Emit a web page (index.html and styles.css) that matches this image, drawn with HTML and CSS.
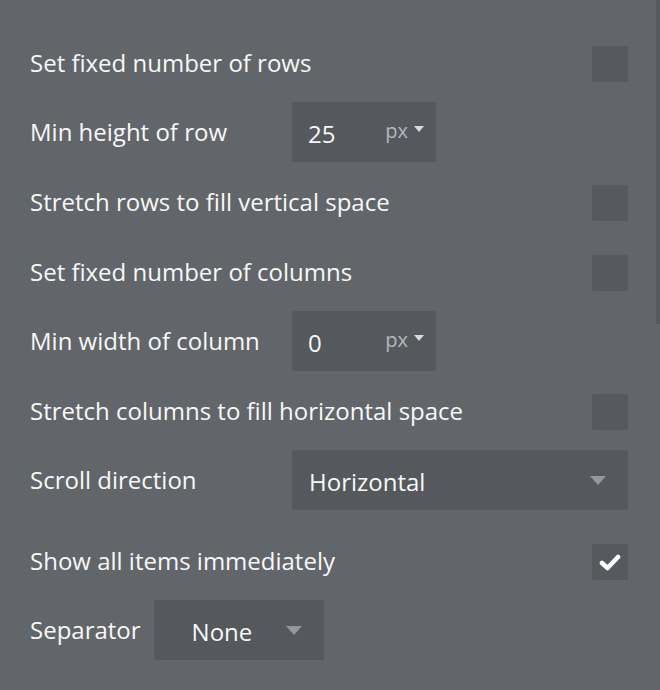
FILE: index.html
```html
<!DOCTYPE html>
<html>
<head>
<meta charset="utf-8">
<link rel="stylesheet" href="styles.css">
</head>
<body>
<div class="panel">
  <div class="row cb"><span class="label">Set fixed number of rows</span><span class="check"></span></div>
  <div class="row inp"><span class="label fixed">Min height of row</span>
    <div class="unit-input"><span class="val">25</span><span class="unit">px</span><span class="caret small"></span></div></div>
  <div class="row cb"><span class="label">Stretch rows to fill vertical space</span><span class="check"></span></div>
  <div class="row cb"><span class="label">Set fixed number of columns</span><span class="check"></span></div>
  <div class="row inp"><span class="label fixed">Min width of column</span>
    <div class="unit-input"><span class="val">0</span><span class="unit">px</span><span class="caret small"></span></div></div>
  <div class="row cb"><span class="label">Stretch columns to fill horizontal space</span><span class="check"></span></div>
  <div class="row inp extra"><span class="label fixed">Scroll direction</span>
    <div class="dropdown wide"><span class="val">Horizontal</span><span class="caret"></span></div></div>
  <div class="row cb"><span class="label">Show all items immediately</span><span class="check on"><svg width="22" height="17" viewBox="0 0 22 17"><polyline points="3,9 8.5,14 19,3" fill="none" stroke="#fff" stroke-width="4.6" stroke-linecap="round" stroke-linejoin="round"/></svg></span></div>
  <div class="row inp"><span class="label sep">Separator</span>
    <div class="dropdown narrow"><span class="val">None</span><span class="caret"></span></div></div>
</div>
<div class="scrollbar"></div>
</body>
</html>
```
FILE: styles.css
```css
html, body {
  margin: 0;
  padding: 0;
  background: #62666a;
  height: 100%;
  overflow: hidden;
}
body {
  font-family: "Open Sans", "Liberation Sans", sans-serif;
  font-size: 24px;
  color: #f7f7f7;
  position: relative;
}
.panel {
  display: flex;
  flex-direction: column;
  gap: 9px;
  padding: 32px 32px 0 30px;
}
.row {
  display: flex;
  align-items: center;
}
.row.cb {
  padding: 14px 0 11px;
  justify-content: space-between;
}
.row.inp {
  height: 60px;
}
.row.extra {
  margin-bottom: 11px;
}
.label {
  white-space: nowrap;
  line-height: 30px;
}
.row.cb .label {
  position: relative;
  top: -1px;
}
.label.fixed {
  width: 262px;
  flex: none;
}
.label.sep {
  margin-right: 13px;
}
.check {
  width: 36px;
  height: 36px;
  border-radius: 2px;
  background: #56595d;
  display: flex;
  align-items: center;
  justify-content: center;
}
.unit-input, .dropdown {
  height: 60px;
  background: #55595d;
  border-radius: 2px;
  display: flex;
  align-items: center;
  box-sizing: border-box;
}
.unit-input {
  width: 144px;
  padding: 0 12px 0 16px;
}
.val {
  position: relative;
  top: 1px;
}
.unit-input .val {
  flex: 1;
}
.unit {
  color: #b4b7ba;
  font-size: 20px;
  margin-right: 6px;
  position: relative;
  top: -2px;
}
.caret {
  width: 0;
  height: 0;
  border-left: 8px solid transparent;
  border-right: 8px solid transparent;
  border-top: 9px solid #95989b;
}
.caret.small {
  border-left-width: 5.5px;
  border-right-width: 5.5px;
  border-top: 6px solid #d8dadb;
  position: relative;
  top: -3px;
}
.dropdown.wide {
  width: 336px;
  padding: 0 22px 0 17px;
}
.dropdown.wide .val {
  flex: 1;
}
.dropdown.narrow {
  width: 170px;
  padding: 0 22px 0 38px;
}
.dropdown.narrow .val {
  flex: 1;
}
.scrollbar {
  position: absolute;
  right: 0;
  top: 0;
  width: 4px;
  height: 324px;
  background: #56595d;
}
```
